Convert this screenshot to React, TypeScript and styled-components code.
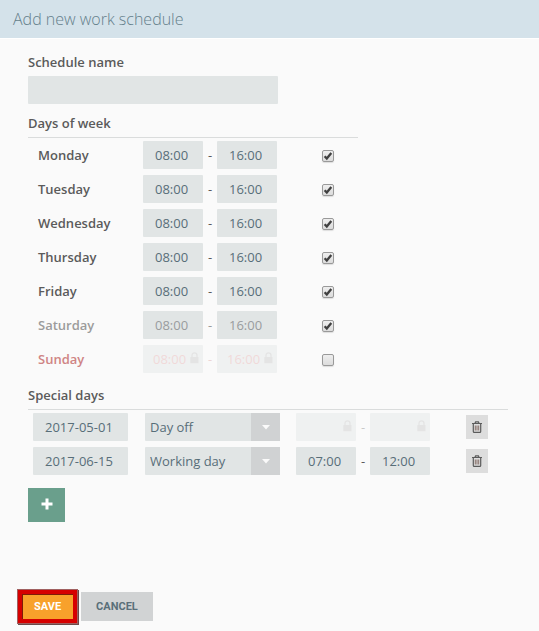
import React, { useState } from "react";
import styled, { createGlobalStyle, css } from "styled-components";

type Tone = "normal" | "muted" | "holiday";

const toneColor: Record<Tone, string> = {
  normal: "#5b5b5b",
  muted: "#9c9c9c",
  holiday: "#cf8484",
};

const Global = createGlobalStyle`
  *, *::before, *::after { box-sizing: border-box; }
  body {
    margin: 0;
    background: #fafafa;
    font-family: "Open Sans", "Noto Sans", sans-serif;
    font-size: 13px;
    color: #5b5b5b;
  }
  button, input, select { font: inherit; margin: 0; }
`;

const Page = styled.form`
  display: flex;
  flex-direction: column;
  min-height: 100vh;
`;

const Header = styled.header`
  padding: 0 13px;
  background: #d4e2ea;
  border-bottom: 1px solid #fff;
`;

const Title = styled.h1`
  margin: 0;
  font-size: 16px;
  font-weight: 300;
  line-height: 38px;
  color: #64808b;
`;

const Content = styled.main`
  padding: 13px 28px 0;
`;

const fieldBox = css`
  height: 28px;
  border: 0;
  border-radius: 1px;
  background: #e1e5e5;
  color: #586e79;
  outline: none;
`;

const NameLabel = styled.label`
  display: block;
  font-weight: 600;
  line-height: 20px;
`;

const NameInput = styled.input`
  ${fieldBox}
  display: block;
  width: 250px;
  max-width: 100%;
  margin-top: 4px;
  padding: 0 6px;
`;

const Section = styled.section<{ $width: number; $gap: number }>`
  max-width: ${(p) => p.$width}px;
  margin-top: ${(p) => p.$gap}px;
`;

const SectionTitle = styled.h2`
  margin: 0 0 3px;
  padding-bottom: 4px;
  border-bottom: 1px solid #dadcdc;
  font-size: 13px;
  font-weight: 600;
  line-height: 20px;
`;

const Rows = styled.div`
  display: grid;
  gap: 6px;
`;

const DayRow = styled.div`
  display: grid;
  grid-template-columns: 105px 134px 1fr;
  align-items: center;
  padding: 0 24px 0 10px;
`;

const DayName = styled.label<{ $tone: Tone }>`
  font-weight: 600;
  line-height: 28px;
  color: ${(p) => toneColor[p.$tone]};
`;

const Range = styled.div`
  display: flex;
`;

const Dash = styled.span<{ $tone: Tone; $locked: boolean }>`
  width: 14px;
  text-align: center;
  line-height: 28px;
  color: ${(p) => toneColor[p.$tone]};
  opacity: ${(p) => (p.$locked ? 0.3 : 1)};
`;

const TimeBox = styled.span<{ $locked: boolean }>`
  position: relative;
  display: block;
  width: 60px;
  opacity: ${(p) => (p.$locked ? 0.4 : 1)};
  svg {
    position: absolute;
    top: 7px;
    right: 4px;
  }
`;

const TimeInput = styled.input<{ $tone: Tone; $locked: boolean }>`
  ${fieldBox}
  display: block;
  width: 100%;
  padding: 0 ${(p) => (p.$locked ? 16 : 12)}px 0 ${(p) => (p.$locked ? 10 : 12)}px;
  color: ${(p) => (p.$tone === "normal" ? "#586e79" : p.$tone === "muted" ? "#999c9e" : "#e3a9a9")};
`;

const Check = styled.input`
  appearance: none;
  width: 12px;
  height: 12px;
  margin-top: 2px;
  border: 1px solid #999;
  border-radius: 2px;
  background: linear-gradient(#eee, #dcdcdc);
  box-shadow: 0 1px 1px #ddd;
`;

const CheckWrap = styled.span`
  position: relative;
  display: grid;
  justify-self: end;
  svg {
    position: absolute;
    top: 3px;
    left: 1px;
    pointer-events: none;
  }
`;

const SpecialRow = styled.div`
  display: grid;
  grid-template-columns: 96px 135px 134px 1fr;
  column-gap: 16px;
  align-items: center;
  padding: 0 20px 0 5px;
`;

const DateInput = styled.input`
  ${fieldBox}
  width: 95px;
  padding: 0 12px;
`;

const SelectBox = styled.span`
  position: relative;
  display: block;
`;

const Select = styled.select`
  ${fieldBox}
  appearance: none;
  display: block;
  width: 100%;
  padding: 0 29px 0 5px;
`;

const Arrow = styled.span`
  position: absolute;
  inset: 0 0 0 auto;
  display: grid;
  place-items: center;
  width: 29px;
  background: #d0d2d3;
  pointer-events: none;
`;

const DeleteButton = styled.button`
  display: grid;
  place-items: center;
  justify-self: end;
  width: 22px;
  height: 24px;
  padding: 0;
  border: 0;
  background: #ddd;
  color: #5b5b5b;
`;

const AddButton = styled.button`
  display: grid;
  place-items: center;
  width: 37px;
  height: 34px;
  margin-top: 13px;
  padding: 0 0 2px;
  border: 0;
  background: #6a9f8c;
`;

const Footer = styled.footer`
  display: flex;
  gap: 6px;
  margin-top: auto;
  padding: 20px 20px 10px;
`;

const Action = styled.button<{ $primary?: boolean }>`
  position: relative;
  height: 29px;
  padding: 0 ${(p) => (p.$primary ? 14 : 15)}px;
  border: 0;
  background: ${(p) => (p.$primary ? "#f8a12b" : "#d1d3d4")};
  color: ${(p) => (p.$primary ? "#fff" : "#5a6f79")};
  font-family: Roboto, sans-serif;
  font-size: 11px;
  font-weight: 700;
  line-height: 29px;
`;

const Highlight = styled.span`
  position: absolute;
  inset: -3px;
  border: 5px solid #d60000;
  outline: 1px solid #a06060;
  outline-offset: -1px;
  box-shadow: 1px 1px 0 #6b4a4a, inset 1px 1px 0 #7d1c08;
  pointer-events: none;
`;

const LockIcon = () => (
  <svg width="9" height="12" viewBox="0 0 9 12" aria-hidden="true">
    <path d="M2 6V3.3a2.5 2.5 0 0 1 5 0V6" fill="none" stroke="#c5c5c5" strokeWidth="1.3" />
    <rect x="0.3" y="5" width="8.2" height="6.2" rx="0.5" fill="#c5c5c5" />
  </svg>
);

const TrashIcon = () => (
  <svg width="12" height="12" viewBox="0 0 12 12" fill="none" stroke="currentColor" aria-hidden="true">
    <path d="M1 2.5h10M4 2.3l.6-1.4h2.8L8 2.3M2.3 2.8v7.6q0 1 .9 1h5.6q.9 0 .9-1V2.8" strokeWidth="1.2" />
    <path d="M4.3 4.5v5M6 4.5v5M7.7 4.5v5" stroke="#87716a" />
  </svg>
);

const PlusIcon = () => (
  <svg width="12" height="12" viewBox="0 0 12 12" aria-hidden="true">
    <path d="M4.5 .5h3v4h4v3h-4v4h-3v-4h-4v-3h4z" fill="#fff" />
  </svg>
);

const CheckIcon = () => (
  <svg width="10" height="10" viewBox="0 0 10 10" aria-hidden="true">
    <path d="M1.6 5.2 3.8 7.5 8.3 2" fill="none" stroke="#404040" strokeWidth="2.3" />
  </svg>
);

interface TimeRangeProps {
  name: string;
  from: string;
  to: string;
  tone?: Tone;
  locked?: boolean;
}

function TimeRange({ name, from, to, tone = "normal", locked = false }: TimeRangeProps) {
  return (
    <Range>
      <TimeBox $locked={locked}>
        <TimeInput aria-label={`${name} start`} defaultValue={from} disabled={locked} $tone={tone} $locked={locked} />
        {locked && <LockIcon />}
      </TimeBox>
      <Dash $tone={tone} $locked={locked}>-</Dash>
      <TimeBox $locked={locked}>
        <TimeInput aria-label={`${name} end`} defaultValue={to} disabled={locked} $tone={tone} $locked={locked} />
        {locked && <LockIcon />}
      </TimeBox>
    </Range>
  );
}

const days: { name: string; tone: Tone }[] = [
  { name: "Monday", tone: "normal" },
  { name: "Tuesday", tone: "normal" },
  { name: "Wednesday", tone: "normal" },
  { name: "Thursday", tone: "normal" },
  { name: "Friday", tone: "normal" },
  { name: "Saturday", tone: "muted" },
  { name: "Sunday", tone: "holiday" },
];

function Day({ name, tone }: { name: string; tone: Tone }) {
  const [active, setActive] = useState(name !== "Sunday");
  return (
    <DayRow>
      <DayName htmlFor={name} $tone={tone}>{name}</DayName>
      <TimeRange name={name} from="08:00" to="16:00" tone={tone} locked={!active} />
      <CheckWrap>
        <Check id={name} type="checkbox" checked={active} onChange={(e) => setActive(e.target.checked)} />
        {active && <CheckIcon />}
      </CheckWrap>
    </DayRow>
  );
}

function SpecialDay({ date, kind, from, to }: { date: string; kind: string; from: string; to: string }) {
  const [type, setType] = useState(kind);
  return (
    <SpecialRow>
      <DateInput aria-label="Date" defaultValue={date} />
      <SelectBox>
        <Select aria-label={`Type of ${date}`} value={type} onChange={(e) => setType(e.target.value)}>
          <option>Day off</option>
          <option>Working day</option>
        </Select>
        <Arrow>
          <svg width="8" height="5" viewBox="0 0 8 5" aria-hidden="true">
            <path d="M0 0h8L4 4.5z" fill="#fafafa" />
          </svg>
        </Arrow>
      </SelectBox>
      <TimeRange name={date} from={from} to={to} locked={type === "Day off"} />
      <DeleteButton type="button" aria-label={`Delete ${date}`}><TrashIcon /></DeleteButton>
    </SpecialRow>
  );
}

export default function App() {
  return (
    <>
      <Global />
      <Page onSubmit={(e) => e.preventDefault()}>
        <Header><Title>Add new work schedule</Title></Header>
        <Content>
          <NameLabel htmlFor="schedule-name">Schedule name</NameLabel>
          <NameInput id="schedule-name" type="text" />
          <Section $width={330} $gap={9}>
            <SectionTitle>Days of week</SectionTitle>
            <Rows>{days.map((d) => <Day key={d.name} {...d} />)}</Rows>
          </Section>
          <Section $width={480} $gap={12}>
            <SectionTitle>Special days</SectionTitle>
            <Rows>
              <SpecialDay date="2017-05-01" kind="Day off" from="" to="" />
              <SpecialDay date="2017-06-15" kind="Working day" from="07:00" to="12:00" />
            </Rows>
          </Section>
          <AddButton type="button" aria-label="Add special day"><PlusIcon /></AddButton>
        </Content>
        <Footer>
          <Action type="submit" $primary>SAVE<Highlight /></Action>
          <Action type="button">CANCEL</Action>
        </Footer>
      </Page>
    </>
  );
}
